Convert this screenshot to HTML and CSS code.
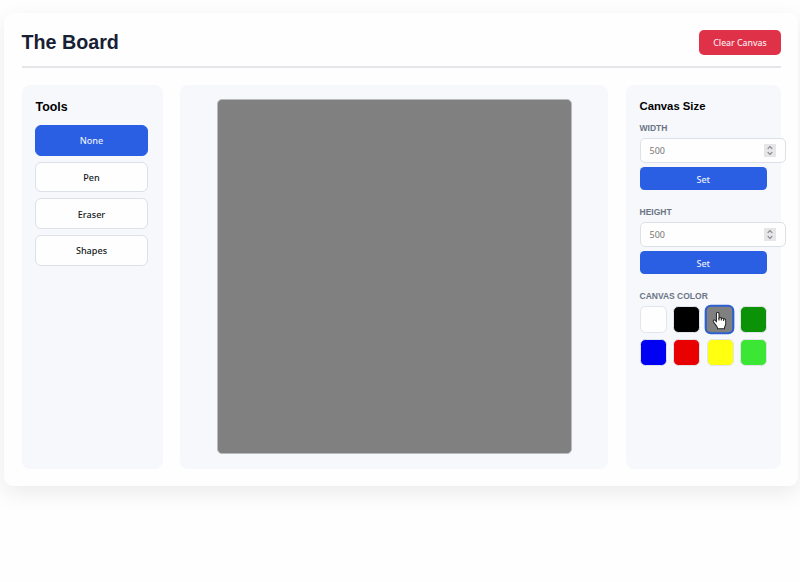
FILE: index.html
```
<!DOCTYPE html>
<html lang="en">
<head>
<meta charset="utf-8">
<title>The Board</title>
<link rel="stylesheet" href="styles.css">
</head>
<body>
<div class="app">
  <header class="header">
    <h1>The Board</h1>
    <button class="clear">Clear Canvas</button>
  </header>
  <main class="main">
    <aside class="panel tools">
      <h2>Tools</h2>
      <button class="tool active">None</button>
      <button class="tool">Pen</button>
      <button class="tool">Eraser</button>
      <button class="tool">Shapes</button>
    </aside>
    <section class="panel stage"><div class="canvas"></div></section>
    <aside class="panel settings">
      <h3>Canvas Size</h3>
      <div class="group">
        <div class="label">WIDTH</div>
        <div class="field"><span>500</span>
          <svg class="spin" viewBox="0 0 12 13"><path d="M3.7 4.8 6 2.5l2.3 2.3M3.7 8.2 6 10.5l2.3-2.3"/></svg>
        </div>
        <button class="set">Set</button>
      </div>
      <div class="group">
        <div class="label">HEIGHT</div>
        <div class="field"><span>500</span>
          <svg class="spin" viewBox="0 0 12 13"><path d="M3.7 4.8 6 2.5l2.3 2.3M3.7 8.2 6 10.5l2.3-2.3"/></svg>
        </div>
        <button class="set">Set</button>
      </div>
      <div class="label">CANVAS COLOR</div>
      <div class="swatches">
        <i class="swatch white"></i>
        <i class="swatch black"></i>
        <i class="swatch gray selected">
          <svg class="pointer" viewBox="0 0 14 18"><path d="M4 10V2.2C4 .4 6.5.4 6.5 2.2V6.5C7 5.6 8.7 5.8 8.8 7c.7-.8 2.1-.5 2.2.6.8-.6 2.1-.2 2.1 1V12c0 2-1.3 2.7-1.3 5H5.2c0-2-1.3-2.6-2.2-4.2L1 10.1C.2 8.8 1.8 7.8 2.8 8.8Z"/><path d="M6.5 6.5V9M8.8 7V9M11 7.6V9.4"/></svg>
        </i>
        <i class="swatch green"></i>
        <i class="swatch blue"></i>
        <i class="swatch red"></i>
        <i class="swatch yellow"></i>
        <i class="swatch lime"></i>
      </div>
    </aside>
  </main>
</div>
</body>
</html>
```
FILE: styles.css
```
* { box-sizing: border-box; }
body {
  margin: 0;
  padding: 13px 2px 0 4px;
  height: 582px;
  overflow: hidden;
  background: #fefefe;
  font-family: "Liberation Sans", Arial, sans-serif;
}
h1, h2, h3 { margin: 0; font-weight: 700; }
button { padding: 0; border: 0; font: 500 9.1px "Noto Sans", sans-serif; }
.app {
  height: 473px;
  padding: 17px 17px 17px 17.5px;
  border-radius: 9px;
  background: #fefefe;
  box-shadow: 0 7px 22px rgba(0, 0, 0, .08);
}
.header {
  display: flex;
  align-items: flex-start;
  justify-content: space-between;
  height: 38px;
  border-bottom: 2px solid #e5e6ea;
}
h1 { font-size: 19.7px; line-height: 24px; color: #182034; }
.clear { width: 82px; height: 25px; border-radius: 5px; background: #df3148; color: #fbe9ed; font-size: 8.7px; }
.main {
  display: grid;
  grid-template-columns: 141px 428px 155.5px;
  justify-content: space-between;
  height: 384px;
  margin-top: 17px;
}
.panel { min-width: 0; border-radius: 8px; background: #f6f8fc; }
.tools { display: flex; flex-direction: column; gap: 6px; padding: 14px 14.5px 0 13.5px; }
h2 { height: 20px; padding-left: .5px; font-size: 12.4px; line-height: 16px; }
.tool {
  height: 30.7px;
  padding-top: 1px;
  border: 1px solid #dce0e8;
  border-radius: 6px;
  background: #fefefe;
  color: #151a22;
}
.tool.active { border-color: #2a5ee3; background: #2a5ee3; color: #e9effd; }
.stage { display: flex; justify-content: center; padding: 14px 0 0 1px; }
.canvas { width: 355px; height: 355px; border: 1px solid #b9babd; border-radius: 5px; background: #808080; }
.settings { padding: 13px 14px; }
h3 { height: 24px; font-size: 11.3px; line-height: 16px; }
.group { height: 84px; }
.label { height: 16px; font-size: 8.5px; font-weight: 700; line-height: 13px; color: #6b7584; }
.field {
  display: flex;
  align-items: center;
  justify-content: space-between;
  width: 146.5px;
  height: 25px;
  padding: 0 9px;
  border: 1px solid #dce0e8;
  border-radius: 5px;
  background: #fefefe;
  color: #777;
  font: 9px "Noto Sans", sans-serif;
}
.spin { width: 12px; height: 13px; background: #e6e6e9; fill: none; stroke: #85868a; stroke-width: 1.1; }
.set { display: block; width: 127.5px; height: 23px; margin-top: 4px; padding-top: 1px; border-radius: 4.5px; background: #2a5ee3; color: #e9effd; }
.swatches { display: grid; grid-template-columns: repeat(4, 27px); justify-content: space-between; gap: 6px 0; width: 127.5px; }
.swatch { position: relative; height: 27px; border: 1px solid #e2e4eb; border-radius: 5.5px; }
.white { background: #fefefe; }
.black { background: #000; }
.gray { background: #808080; }
.green { background: #0c9206; }
.blue { background: #0000f3; }
.red { background: #e90000; }
.yellow { background: #ffff10; }
.lime { background: #3ce635; }
.selected { left: -.5px; border: 2px solid #2d60cf; transform: scale(1.1); }
.pointer { position: absolute; left: 4.5px; top: 4px; width: 13px; height: 17px; fill: #fff; stroke: #222; stroke-width: 1; }
```
